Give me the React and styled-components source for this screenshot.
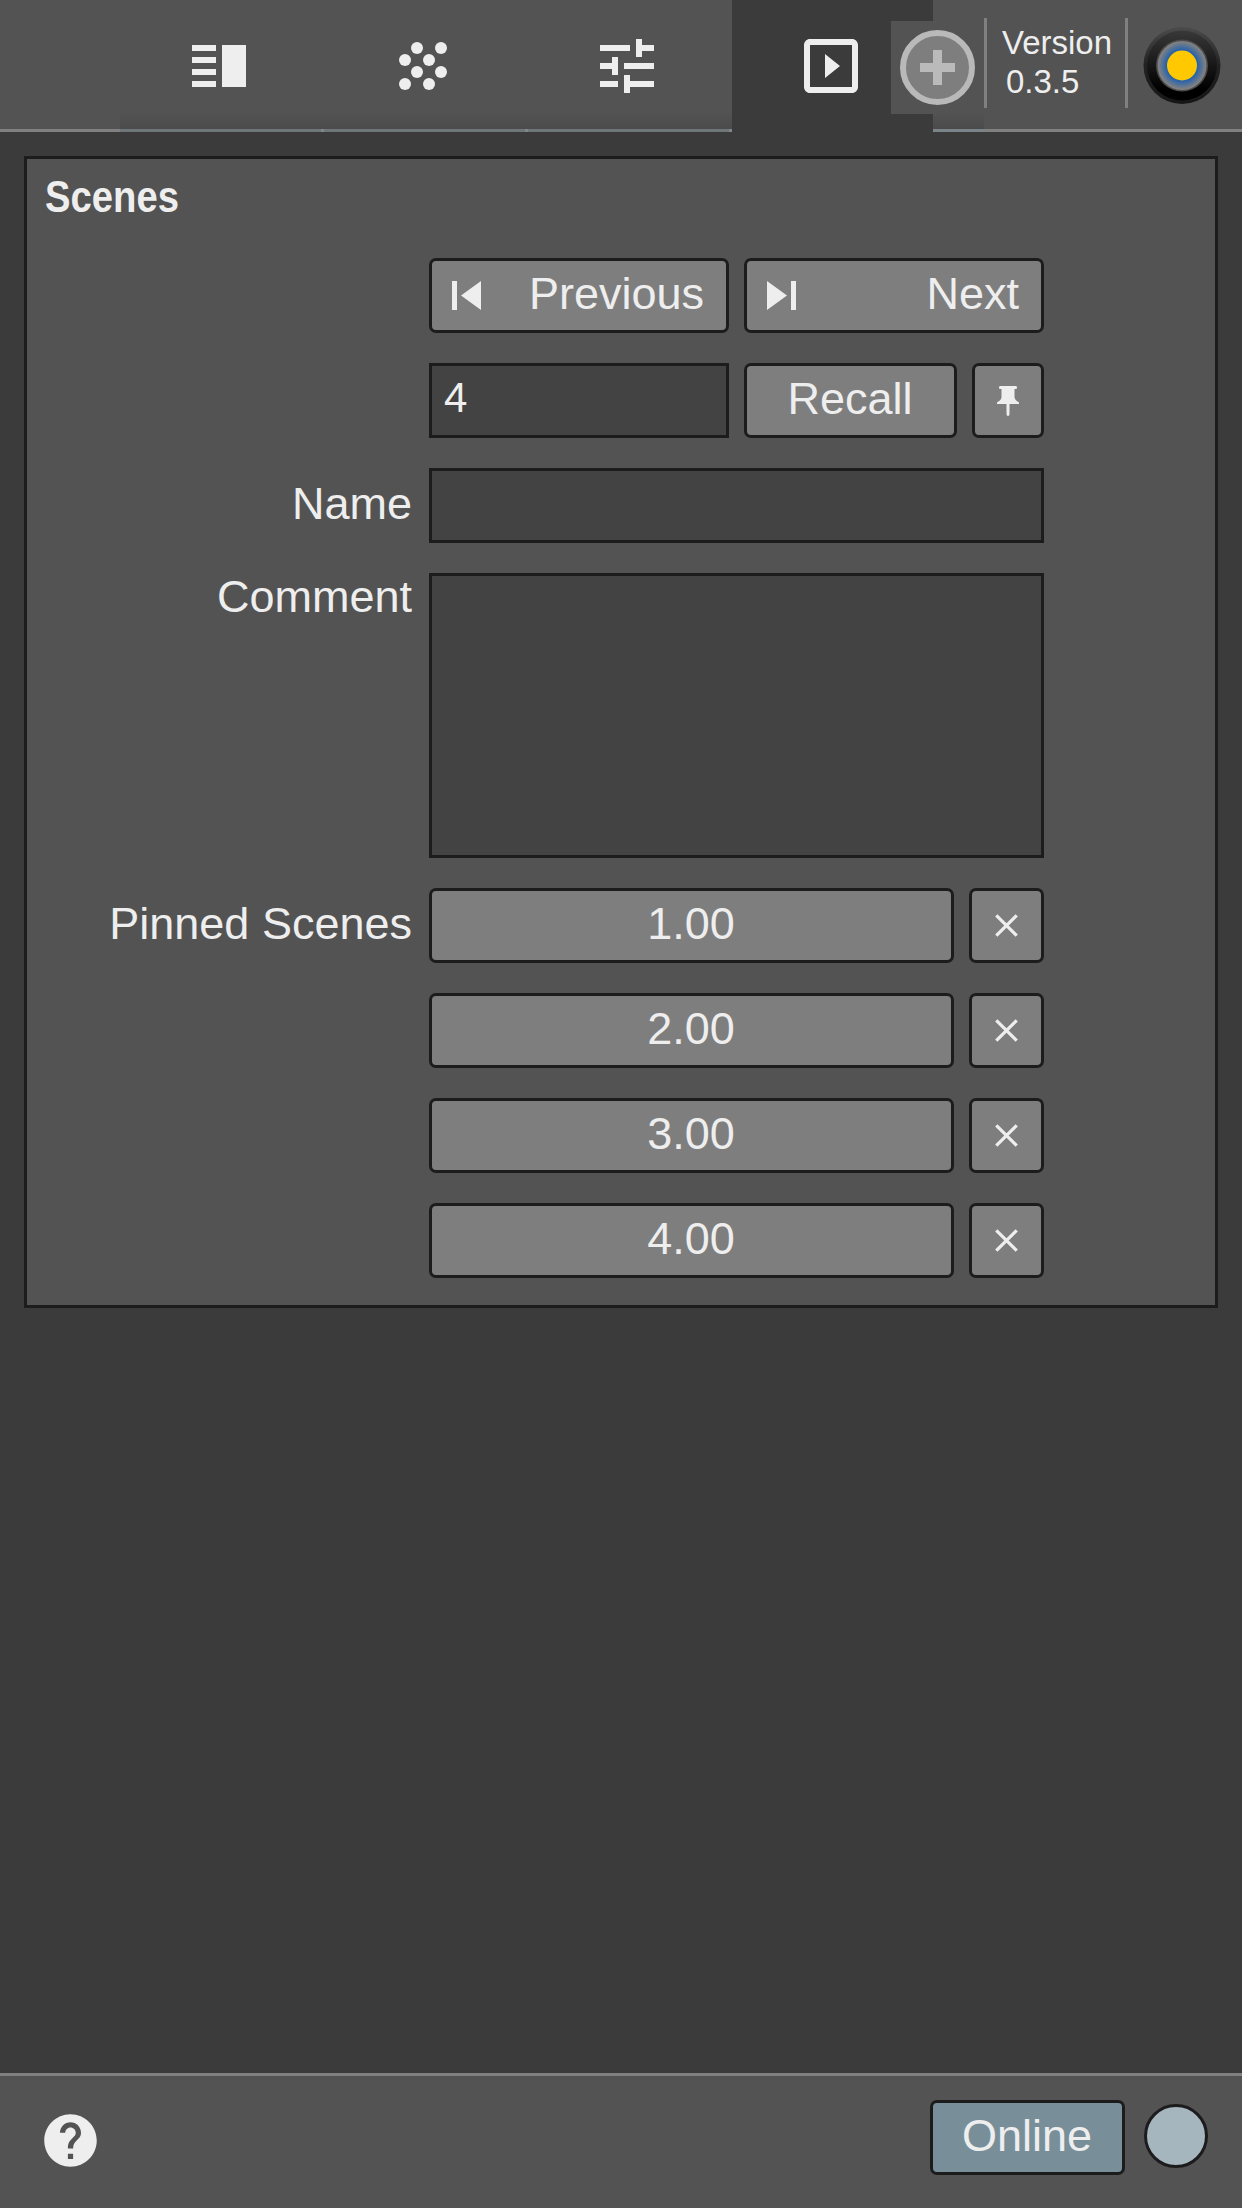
import React from "react";
import styled, { createGlobalStyle } from "styled-components";

const GlobalStyle = createGlobalStyle`
  * { box-sizing: border-box; }
  body { margin: 0; background: #3b3b3b; }
`;

const Screen = styled.div`
  width: 1242px;
  height: 2208px;
  display: flex;
  flex-direction: column;
  overflow: hidden;
  background: #3b3b3b;
  color: #eeeeee;
  font-family: "Liberation Sans", Arial, sans-serif;
  font-size: 45px;
`;

const Header = styled.header`
  height: 132px;
  flex: none;
  display: flex;
  padding-left: 120px;
  background: linear-gradient(#808080, #808080) bottom / 100% 3px no-repeat #535353;
`;

const Tabs = styled.nav`
  position: relative;
  width: 864px;
  display: flex;
  overflow: hidden;
`;

const Tab = styled.div`
  width: ${(p) => p.$width || 204}px;
  flex: none;
  height: 132px;
  display: flex;
  justify-content: ${(p) => (p.$start !== undefined ? "flex-start" : "center")};
  padding: ${(p) => (p.$start !== undefined ? `30px 0 0 ${p.$start}px` : "30px 6px 0 0")};
  background: ${(p) =>
    p.$active
      ? "#3b3b3b"
      : "linear-gradient(#80868a, #80868a) right bottom / 3px 3px no-repeat, linear-gradient(#6e7679, #6e7679) bottom / 100% 3px no-repeat, linear-gradient(#535353 112px, #4b4b4b 129px)"};
`;

const TabRest = styled.div`
  flex: 1;
  background: linear-gradient(#7b8589, #7b8589) bottom / 100% 3px no-repeat,
    linear-gradient(#535353 112px, #4b4b4b 129px);
`;

const AddBox = styled.div`
  position: absolute;
  top: 21px;
  right: 0;
  width: 93px;
  height: 93px;
  padding: 9px;
  background: #535353;
`;

const Icon = styled.svg`
  display: block;
  flex: none;
  fill: #eeeeee;
`;

const Version = styled.div`
  width: 144px;
  height: 90px;
  margin-top: 18px;
  border: solid #808080;
  border-width: 0 3px;
  padding: 5px 0 0 15px;
  font-size: 33px;
  line-height: 39px;
`;

const VersionNumber = styled.div`
  padding-left: 4px;
`;

const Logo = styled.div`
  padding: 25px 0 0 14px;
`;

const Main = styled.main`
  flex: 1;
  padding: 24px;
`;

const Panel = styled.section`
  height: 1152px;
  border: 3px solid #1c1c1c;
  background: #535353;
  padding: 12px 0 0 18px;
`;

const Title = styled.h1`
  margin: 0;
  height: 87px;
  font-size: 45px;
  line-height: 52px;
  font-weight: bold;
  transform: scaleX(0.85);
  transform-origin: left;
`;

const Rows = styled.div`
  display: flex;
  flex-direction: column;
  gap: 30px;
`;

const Row = styled.div`
  display: flex;
  height: ${(p) => p.$height || 75}px;
`;

const Label = styled.label`
  width: 384px;
  flex: none;
  padding-right: 17px;
  text-align: right;
  line-height: ${(p) => p.$line || 71}px;
  white-space: nowrap;
`;

const Controls = styled.div`
  width: 615px;
  display: flex;
  gap: 15px;
`;

const Button = styled.button`
  width: ${(p) => p.$width}px;
  height: 75px;
  flex: none;
  display: flex;
  align-items: center;
  justify-content: ${(p) => (p.$spread ? "space-between" : "center")};
  padding: ${(p) => (p.$spread ? "0 21px 0 20px" : 0)};
  border: 3px solid #1c1c1c;
  border-radius: 7px;
  background: ${(p) => p.$color || "#7e7e7e"};
  color: #eeeeee;
  font: inherit;
`;

const Caption = styled.span`
  line-height: 52px;
  padding: 0 1px 3px 0;
`;

const Field = styled.div`
  width: ${(p) => p.$width || 615}px;
  height: 100%;
  border: 3px solid #1c1c1c;
  background: #434343;
  padding: 0 12px;
  font-size: 42px;
  line-height: 64px;
`;

const Footer = styled.footer`
  height: 135px;
  flex: none;
  display: flex;
  align-items: flex-start;
  border-top: 3px solid #808080;
  background: #535353;
  padding: 24px 34px 0 39px;
`;

const Help = styled.div`
  margin: 9px auto 0 0;
`;

const Lamp = styled.div`
  width: 64px;
  height: 64px;
  margin: 4px 0 0 19px;
  border: 3px solid #1c1c1c;
  border-radius: 50%;
  background: #a6b6be;
`;

const TabIcon = ({ children }) => (
  <Icon width="72" height="72" viewBox="0 0 24 24">{children}</Icon>
);

const GRAIN = [[10, 6], [18, 6], [6, 10], [14, 10], [10, 14], [18, 14], [6, 18], [14, 18]];
const PINNED = ["1.00", "2.00", "3.00", "4.00"];

export default function App() {
  return (
    <Screen>
      <GlobalStyle />
      <Header>
        <Tabs>
          <Tab $start={63}>
            <TabIcon>
              <path d="M3 15h8v-2H3v2zm0 4h8v-2H3v2zm0-8h8V9H3v2zm0-6v2h8V5H3zm10 0h8v14h-8V5z" />
            </TabIcon>
          </Tab>
          <Tab $start={63}>
            <TabIcon>
              {GRAIN.map(([x, y]) => (
                <circle key={`${x}-${y}`} cx={x} cy={y} r="2" />
              ))}
            </TabIcon>
          </Tab>
          <Tab $start={63}>
            <TabIcon>
              <path d="M3 17v2h6v-2H3zM3 5v2h10V5H3zm10 16v-2h8v-2h-8v-2h-2v6h2zM7 9v2H3v2h4v2h2V9H7zm14 4v-2H11v2h10zm-6-4h2V7h4V5h-4V3h-2v6z" />
            </TabIcon>
          </Tab>
          <Tab $active $width={201} $start={63}>
            <TabIcon>
              <path d="M10 8v8l5-4-5-4zm9-5H5c-1.1 0-2 .9-2 2v14c0 1.1.9 2 2 2h14c1.1 0 2-.9 2-2V5c0-1.1-.9-2-2-2zm0 16H5V5h14v14z" />
            </TabIcon>
          </Tab>
          <TabRest />
          <AddBox>
            <Icon width="75" height="75" viewBox="0 0 75 75">
              <circle cx="37.5" cy="37.5" r="34.5" fill="#7e7e7e" stroke="#b9b9b9" strokeWidth="6" />
              <path d="M33 20h9v13h13v9H42v13h-9V42H20v-9h13z" fill="#bababa" />
            </Icon>
          </AddBox>
        </Tabs>
        <Version>
          <div>Version</div>
          <VersionNumber>0.3.5</VersionNumber>
        </Version>
        <Logo>
          <Icon width="80" height="80" viewBox="0 0 80 80">
            <defs>
              <linearGradient id="rim" x2="0" y2="1">
                <stop offset="0" stopColor="#4b4b4b" />
                <stop offset="0.5" stopColor="#222222" />
                <stop offset="1" stopColor="#161616" />
              </linearGradient>
              <linearGradient id="body" x2="0" y2="1">
                <stop offset="0" stopColor="#383838" />
                <stop offset="0.85" stopColor="#000000" />
              </linearGradient>
              <radialGradient id="glow">
                <stop offset="0.6" stopColor="#1f5fae" />
                <stop offset="0.97" stopColor="#828282" />
                <stop offset="1" stopColor="#777777" />
              </radialGradient>
            </defs>
            <circle cx="40" cy="40.5" r="38.5" fill="url(#rim)" />
            <circle cx="40" cy="40.5" r="35" fill="url(#body)" />
            <circle cx="40" cy="40.5" r="26" fill="#4c4c4c" />
            <circle cx="40" cy="40.5" r="24.5" fill="url(#glow)" />
            <circle cx="40" cy="40.5" r="15" fill="#ffc800" />
          </Icon>
        </Logo>
      </Header>

      <Main>
        <Panel>
          <Title>Scenes</Title>
          <Rows>
            <Row>
              <Label />
              <Controls>
                <Button $width={300} $spread>
                  <Icon width="29" height="29" viewBox="0 0 29 29">
                    <path d="M0 0h5v29H0zM29 0v29L9 14.5z" />
                  </Icon>
                  <Caption>Previous</Caption>
                </Button>
                <Button $width={300} $spread>
                  <Icon width="29" height="29" viewBox="0 0 29 29">
                    <path d="M24 0h5v29h-5zM0 0v29l20-14.5z" />
                  </Icon>
                  <Caption>Next</Caption>
                </Button>
              </Controls>
            </Row>
            <Row>
              <Label />
              <Controls>
                <Field $width={300}>4</Field>
                <Button $width={213}><Caption>Recall</Caption></Button>
                <Button $width={72}>
                  <Icon width="22" height="30" viewBox="0 0 22 30">
                    <path d="M3 0h16q1 0 1 1.500t-1 1.500h-1.500v8q0 3 4 5 1 1 .500 2H12.500v10q0 2-1.500 2t-1.500-2V18H0q-.500-1 .500-2 4-2 4-5V3H3q-1 0-1-1.500T3 0z" />
                  </Icon>
                </Button>
              </Controls>
            </Row>
            <Row>
              <Label>Name</Label>
              <Controls><Field /></Controls>
            </Row>
            <Row $height={285}>
              <Label $line={47}>Comment</Label>
              <Controls><Field /></Controls>
            </Row>
            {PINNED.map((scene, i) => (
              <Row key={scene}>
                <Label>{i === 0 ? "Pinned Scenes" : ""}</Label>
                <Controls>
                  <Button $width={525}><Caption>{scene}</Caption></Button>
                  <Button $width={75}>
                    <Icon width="23" height="23" viewBox="0 0 23 23">
                      <path d="M1.300 1.300l20.400 20.400M21.700 1.300L1.300 21.700" stroke="#eeeeee" strokeWidth="3.200" />
                    </Icon>
                  </Button>
                </Controls>
              </Row>
            ))}
          </Rows>
        </Panel>
      </Main>

      <Footer>
        <Help>
          <Icon width="63" height="63" viewBox="0 0 24 24">
            <path d="M12 2C6.480 2 2 6.480 2 12s4.480 10 10 10 10-4.480 10-10S17.520 2 12 2zm1 17h-2v-2h2v2zm2.070-7.750l-.900.920C13.450 12.900 13 13.500 13 15h-2v-.500c0-1.100.450-2.100 1.170-2.830l1.240-1.260c.370-.360.590-.860.590-1.410 0-1.100-.900-2-2-2s-2 .900-2 2H8c0-2.210 1.790-4 4-4s4 1.790 4 4c0 .880-.360 1.680-.930 2.250z" />
          </Icon>
        </Help>
        <Button $width={195} $color="#788f9a"><Caption>Online</Caption></Button>
        <Lamp />
      </Footer>
    </Screen>
  );
}
